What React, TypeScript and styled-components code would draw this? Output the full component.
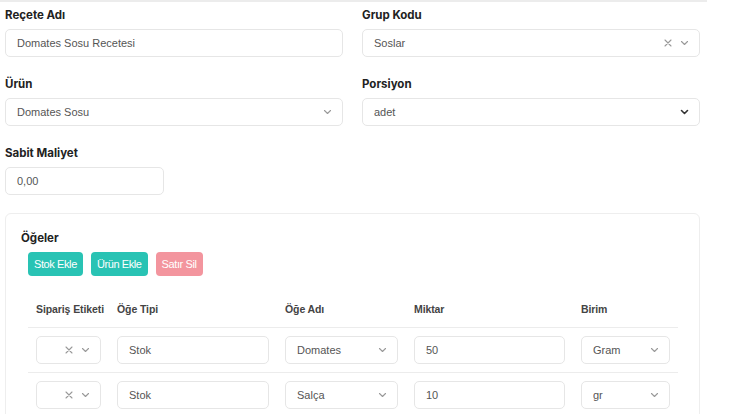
import React from 'react';
import styled, { createGlobalStyle } from 'styled-components';

const GlobalStyle = createGlobalStyle`
body {
  margin: 0;
  background: #fff;
  font-family: "Liberation Sans", Arial, sans-serif;
}
`;

const Page = styled.div`
width: 746px;
`;
const TopRule = styled.div`
width: 707px;
height: 2px;
background: #ececec;
`;
const Form = styled.div`
width: 695px;
padding: 4px 0 0 5px;
`;
const FieldGrid = styled.div`
display: grid;
grid-template-columns: 338px 338px;
column-gap: 19px;
row-gap: 18px;
`;
const Field = styled.div`
display: flex;
flex-direction: column;
gap: 5px;
`;
const Label = styled.label`
font-family: Inter, "Open Sans", sans-serif;
font-weight: 700;
font-size: 11.5px;
line-height: 18px;
color: #222;
`;
const Box = styled.div<{ $width?: number }>`
box-sizing: border-box;
height: 28px;
width: ${p => (p.$width ? `${p.$width}px` : '100%')};
display: flex;
align-items: center;
padding: 0 10px 0 11px;
border: 1px solid #e6e6e6;
border-radius: 5px;
background: #fff;
font-size: 11px;
color: #555;
`;
const Value = styled.span`
flex: 1;
white-space: nowrap;
overflow: hidden;
`;
const Icons = styled.span`
display: flex;
align-items: center;
gap: 8px;
`;
const Card = styled.div`
margin-top: 18px;
border: 1px solid #eeeeee;
border-radius: 6px;
padding: 15px 22px 0 15px;
height: 220px;
`;
const CardTitle = styled.div`
font-family: Inter, "Open Sans", sans-serif;
font-weight: 700;
font-size: 11.5px;
line-height: 18px;
color: #222;
`;
const ButtonBar = styled.div`
display: flex;
gap: 8px;
margin: 5px 0 0 7px;
`;
const Button = styled.button<{ $danger?: boolean }>`
height: 24px;
padding: 0 6px;
border: none;
border-radius: 4px;
background: ${p => (p.$danger ? '#f3959e' : '#29c3b4')};
color: #fff;
font-family: "Liberation Sans", Arial, sans-serif;
font-size: 11px;
letter-spacing: -0.4px;
`;
const Table = styled.div`
margin: 15px 0 0 7px;
width: 650px;
`;
const Row = styled.div<{ $head?: boolean }>`
display: grid;
grid-template-columns: 81px 168px 129px 167px 105px;
align-items: center;
height: ${p => (p.$head ? '36px' : '44px')};
border-bottom: 1px solid #ececec;
`;
const HeadCell = styled.div`
padding: 0 8px;
font-family: "Liberation Sans", Arial, sans-serif;
font-weight: 700;
font-size: 10.5px;
letter-spacing: -0.1px;
color: #444;
white-space: nowrap;
`;
const Cell = styled.div`
padding: 0 8px;
`;

const Chevron = ({ dark }: { dark?: boolean }) => (
  <svg width="9" height="6" viewBox="0 0 9 6" fill="none">
    <path d="M1.5 1.5l3 3 3-3" stroke={dark ? '#333' : '#999'} strokeWidth={dark ? 1.6 : 1.1} strokeLinecap="round" strokeLinejoin="round" />
  </svg>
);
const Clear = () => (
  <svg width="8" height="8" viewBox="0 0 8 8" fill="none">
    <path d="M1 1l6 6M7 1L1 7" stroke="#999" strokeWidth="1.1" strokeLinecap="round" />
  </svg>
);

function Select({ value, clearable, dark, width }: { value?: string; clearable?: boolean; dark?: boolean; width?: number }) {
  return <Box $width={width}>
    <Value>{value}</Value>
    <Icons>
      {clearable && <Clear />}
      <Chevron dark={dark} />
    </Icons>
  </Box>;
}

const rows = [
  { tip: 'Stok', ad: 'Domates', miktar: '50', birim: 'Gram' },
  { tip: 'Stok', ad: 'Salça', miktar: '10', birim: 'gr' },
];

function App() {
  return <>
    <GlobalStyle />
    <Page>
      <TopRule />
      <Form>
        <FieldGrid>
          <Field>
            <Label>Reçete Adı</Label>
            <Box><Value>Domates Sosu Recetesi</Value></Box>
          </Field>
          <Field>
            <Label>Grup Kodu</Label>
            <Select value='Soslar' clearable />
          </Field>
          <Field>
            <Label>Ürün</Label>
            <Select value='Domates Sosu' />
          </Field>
          <Field>
            <Label>Porsiyon</Label>
            <Select value='adet' dark />
          </Field>
          <Field>
            <Label>Sabit Maliyet</Label>
            <Box $width={159}><Value>0,00</Value></Box>
          </Field>
        </FieldGrid>
        <Card>
          <CardTitle>Öğeler</CardTitle>
          <ButtonBar>
            <Button>Stok Ekle</Button>
            <Button>Ürün Ekle</Button>
            <Button $danger>Satır Sil</Button>
          </ButtonBar>
          <Table>
            <Row $head>
              <HeadCell>Sipariş Etiketi</HeadCell>
              <HeadCell>Öğe Tipi</HeadCell>
              <HeadCell>Öğe Adı</HeadCell>
              <HeadCell>Miktar</HeadCell>
              <HeadCell>Birim</HeadCell>
            </Row>
            {rows.map((r, i) => <Row key={`row${i}`}>
              <Cell><Select clearable /></Cell>
              <Cell><Box><Value>{r.tip}</Value></Box></Cell>
              <Cell><Select value={r.ad} /></Cell>
              <Cell><Box><Value>{r.miktar}</Value></Box></Cell>
              <Cell><Select value={r.birim} /></Cell>
            </Row>)}
          </Table>
        </Card>
      </Form>
    </Page>
  </>;
}

export default App;
